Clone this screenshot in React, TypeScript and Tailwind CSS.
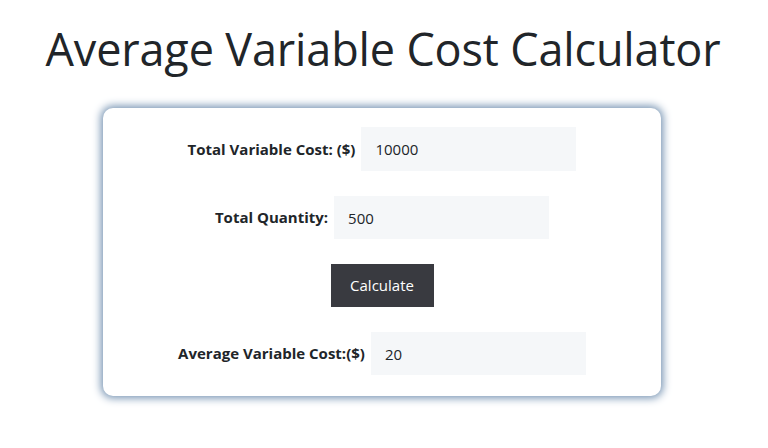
import { useState } from "react";

export default function App() {
  const [cost, setCost] = useState("10000");
  const [qty, setQty] = useState("500");
  const [avg, setAvg] = useState("20");

  function calculate() {
    const c = parseFloat(cost);
    const q = parseFloat(qty);
    if (!isNaN(c) && !isNaN(q) && q !== 0) setAvg(String(c / q));
  }

  return (
    <div className="min-h-[448px] w-[768px] bg-white font-['Open_Sans',sans-serif] text-[#212529]">
      <h1 className="pt-[20px] pr-[2px] text-center text-[45px] font-normal leading-[58px] tracking-[-0.15px]">
        Average Variable Cost Calculator
      </h1>
      <div className="ml-[103px] mt-[30px] flex w-[558px] flex-col items-center gap-[25px] rounded-[10px] bg-white pt-[19px] pb-[21px] shadow-[0_0_8px_2px_#7290b0]">
        <div className="flex items-center gap-[6px]">
          <label className="text-[15px] font-bold">Total Variable Cost: ($)</label>
          <input
            value={cost}
            onChange={(e) => setCost(e.target.value)}
            className="h-[44px] w-[215px] bg-[#f5f7f9] px-[14px] text-[15px] outline-none"
          />
        </div>
        <div className="flex items-center gap-[6px]">
          <label className="text-[15px] font-bold">Total Quantity:</label>
          <input
            value={qty}
            onChange={(e) => setQty(e.target.value)}
            className="h-[43px] w-[215px] bg-[#f5f7f9] px-[14px] text-[15px] outline-none"
          />
        </div>
        <button
          onClick={calculate}
          className="h-[43px] w-[103px] bg-[#393a40] text-[15px] text-white"
        >
          Calculate
        </button>
        <div className="flex items-center gap-[6px]">
          <label className="text-[15px] font-bold">Average Variable Cost:($)</label>
          <input
            value={avg}
            readOnly
            className="h-[43px] w-[215px] bg-[#f5f7f9] px-[14px] text-[15px] outline-none"
          />
        </div>
      </div>
    </div>
  );
}
